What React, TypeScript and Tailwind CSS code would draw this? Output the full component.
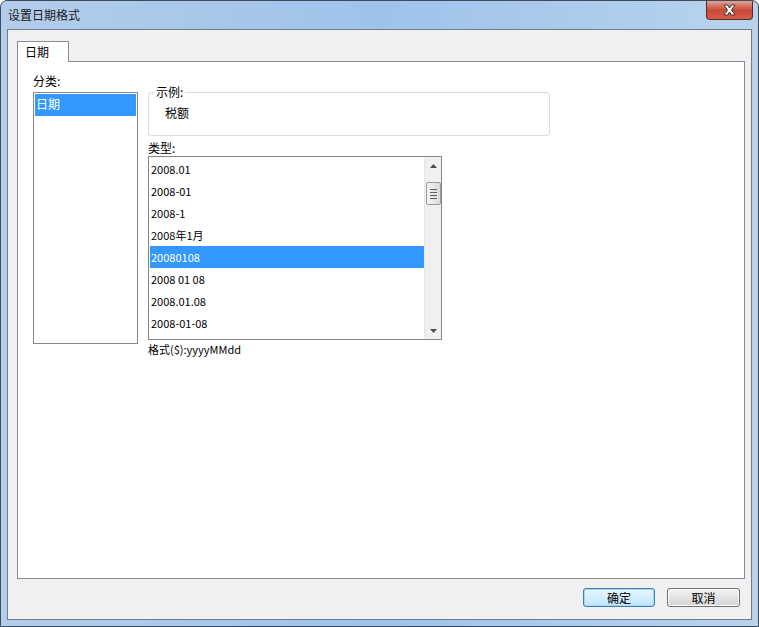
import React from 'react';

const font = { fontFamily: '"Noto Sans CJK SC", "Liberation Sans", sans-serif' };

const types = [
  '2008.01',
  '2008-01',
  '2008-1',
  '2008年1月',
  '20080108',
  '2008 01 08',
  '2008.01.08',
  '2008-01-08',
];

function ScrollBar() {
  return (
    <div className="w-[17px] h-full bg-[#f0f0f0] border-l border-[#e6e6e6] flex flex-col items-center">
      <div className="h-[17px] w-full flex items-center justify-center">
        <svg width="7" height="4" viewBox="0 0 7 4">
          <path d="M0 4 L3.5 0 L7 4 Z" fill="#4d4d4d" />
        </svg>
      </div>
      <div className="mt-[8px] w-[15px] h-[23px] rounded-[2px] border border-[#9a9a9a] bg-gradient-to-r from-[#f4f4f4] to-[#dcdcdc] flex flex-col items-center justify-center gap-[2px]">
        <div className="w-[7px] h-px bg-[#606060]" />
        <div className="w-[7px] h-px bg-[#606060]" />
        <div className="w-[7px] h-px bg-[#606060]" />
        <div className="w-[7px] h-px bg-[#606060]" />
      </div>
      <div className="flex-1" />
      <div className="h-[17px] w-full flex items-center justify-center">
        <svg width="7" height="4" viewBox="0 0 7 4">
          <path d="M0 0 L7 0 L3.5 4 Z" fill="#4d4d4d" />
        </svg>
      </div>
    </div>
  );
}

export default function App() {
  return (
    <div className="w-[759px] h-[627px] text-[12px] text-black" style={font}>
      <div className="w-full h-full flex flex-col border border-[#3e4b5c] rounded-t-[7px] bg-gradient-to-r from-[#b3cdea] via-[#9ec3ea] to-[#b8d3ee] overflow-hidden">
        {/* Title bar */}
        <div className="h-[28px] flex items-start justify-between shrink-0">
          <div className="pl-[7px] pt-[6px] leading-[16px] text-[12px] text-[#1a1a1a]">设置日期格式</div>
          <div className="mr-[5px] w-[47px] h-[19px] rounded-b-[4px] border border-t-0 border-[#5e2a22] bg-gradient-to-b from-[#e0a292] via-[#c8493a] to-[#d45c45] flex items-center justify-center">
            <svg width="15" height="12" viewBox="0 0 15 12">
              <path d="M2 1 L5.5 1 L7.5 4 L9.5 1 L13 1 L9.5 6 L13 11 L9.5 11 L7.5 8 L5.5 11 L2 11 L5.5 6 Z" fill="#ffffff" stroke="#3a3a3a" strokeWidth="1" />
            </svg>
          </div>
        </div>

        {/* Client area */}
        <div className="flex-1 mx-[6px] mb-[6px] border border-[#6d7d90] bg-[#f0f0f0] flex flex-col">
          <div className="flex-1 flex flex-col pl-[9px] pr-[6px] pt-[11px]">
            {/* Tab header */}
            <div className="flex h-[20px]">
              <div className="w-[52px] h-[21px] bg-white border border-b-0 border-[#898c95] pl-[7px] leading-[19px] relative z-10">
                日期
              </div>
            </div>
            {/* Tab panel */}
            <div className="flex-1 bg-white border border-[#898c95] flex pl-[15px] pt-[12px] gap-[10px]">
              {/* Category */}
              <div className="flex flex-col w-[105px]">
                <div className="leading-[14px] h-[18px]">分类:</div>
                <div className="h-[252px] border border-[#828790] bg-white p-px">
                  <div className="h-[22px] bg-[#3399ff] text-white pl-[1px] leading-[20px]">日期</div>
                </div>
              </div>
              {/* Right column */}
              <div className="flex flex-col w-[402px] pt-[18px]">
                <div className="relative h-[44px] border border-[#d5dfe5] rounded-[3px]">
                  <div className="absolute left-[5px] top-[-9px] bg-white px-[2px] leading-[16px]">示例:</div>
                  <div className="pl-[16px] pt-[12px] leading-[16px]">税额</div>
                </div>
                <div className="mt-[4px] leading-[16px] h-[16px]">类型:</div>
                <div className="w-[294px] h-[184px] border border-[#828790] bg-white flex overflow-hidden">
                  <div className="flex-1 pl-px pt-px overflow-hidden">
                    {types.map((t, i) => (
                      <div
                        key={t}
                        className={`h-[22px] pl-[1px] leading-[22px] text-[11px] ${i === 4 ? 'bg-[#3399ff] text-white' : ''}`}
                      >
                        {t}
                      </div>
                    ))}
                  </div>
                  <ScrollBar />
                </div>
                <div className="mt-[1px] h-[16px] leading-[16px] text-[11px] whitespace-nowrap">格式($):yyyyMMdd</div>
              </div>
            </div>
          </div>
          {/* Buttons */}
          <div className="flex justify-end gap-[12px] pr-[11px] pt-[9px] pb-[12px]">
            <button className="w-[72px] h-[19px] rounded-[3px] border border-[#3c7fb1] bg-gradient-to-b from-[#eaf6fd] to-[#bee6fd] leading-[17px] text-[12px] shadow-[inset_0_0_0_1px_#a7d8f5]">
              确定
            </button>
            <button className="w-[73px] h-[19px] rounded-[3px] border border-[#707070] bg-gradient-to-b from-[#f2f2f2] to-[#d5d5d5] leading-[17px] text-[12px] shadow-[inset_0_0_0_1px_#fcfcfc]">
              取消
            </button>
          </div>
        </div>
      </div>
    </div>
  );
}
